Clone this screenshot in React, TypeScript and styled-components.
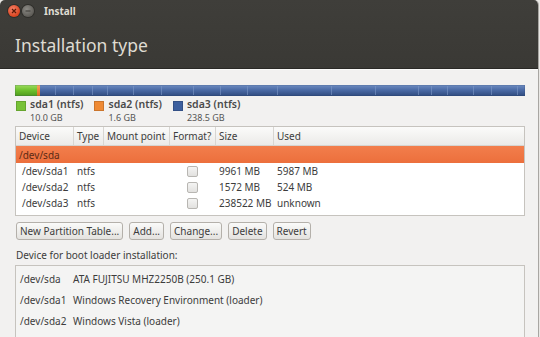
import React from 'react';
import styled, { createGlobalStyle } from 'styled-components';

const GlobalStyle = createGlobalStyle`
  html, body {
    margin: 0;
    padding: 0;
    background: #e9e7e4;
  }
  body {
    font-family: "Noto Sans", "DejaVu Sans", sans-serif;
    font-size: 10px;
    color: #3c3c3c;
  }
`;

const Window = styled.div`
  width: 538px;
  height: 337px;
  overflow: hidden;
  background: #f2f1f0;
  border-right: 1px solid #a8a6a2;
  border-radius: 5px 5px 0 0;
  display: flex;
  flex-direction: column;
`;

const Header = styled.div`
  height: 68px;
  background: linear-gradient(#3f3e3a, #3a3935);
  border-bottom: 1px solid #2a2926;
  display: flex;
  flex-direction: column;
  flex-shrink: 0;
`;

const TitleBar = styled.div`
  height: 21px;
  display: flex;
  align-items: center;
  padding-left: 8px;
  gap: 2px;
`;

const WinButton = styled.div<{ $kind: 'close' | 'min' }>`
  width: 12px;
  height: 12px;
  border-radius: 50%;
  display: flex;
  align-items: center;
  justify-content: center;
  background: ${p => (p.$kind === 'close'
    ? 'radial-gradient(circle at 40% 35%, #f6836a, #d9431e 70%)'
    : 'radial-gradient(circle at 40% 35%, #8c8a85, #5e5c57 70%)')};
  box-shadow: 0 0 0 1px #2f2e2a;
`;

const Title = styled.span`
  margin-left: 8px;
  font-weight: bold;
  font-size: 10px;
  color: #dfdbd2;
`;

const Heading = styled.h1`
  margin: 12px 0 0 15px;
  font-weight: normal;
  font-size: 17.5px;
  color: #dfdbd2;
`;

const Body = styled.div`
  flex: 1;
  padding: 15px 13px 0 15px;
  border-top: 1px solid #fafaf9;
  display: flex;
  flex-direction: column;
`;

const Legend = styled.div`
  display: flex;
  gap: 11px;
  margin-top: 2px;
  padding-left: 1px;
`;

const LegendItem = styled.div`
  display: flex;
  gap: 4px;
`;

const Swatch = styled.div<{ $color: string }>`
  width: 8px;
  height: 8px;
  margin-top: 3px;
  background: ${p => p.$color};
  border: 1px solid rgba(0, 0, 0, 0.15);
`;

const LegendText = styled.div`
  display: flex;
  flex-direction: column;
  gap: 1px;
`;

const LegendName = styled.span`
  font-size: 10.5px;
  line-height: 13px;
  font-weight: 600;
  color: #4a4a4a;
`;

const LegendSize = styled.span`
  font-size: 9px;
  line-height: 11px;
  color: #555;
`;

const Table = styled.div`
  margin-top: 3px;
  background: #fff;
  border: 1px solid #c6c3be;
  height: 88px;
`;

const Row = styled.div<{ $selected?: boolean }>`
  display: grid;
  grid-template-columns: 58px 30px 66px 46px 58px 1fr;
  height: ${p => (p.$selected ? 17 : 16)}px;
  align-items: center;
  background: ${p => (p.$selected ? 'linear-gradient(#f27e4c, #ec6f3c)' : 'transparent')};
  color: ${p => (p.$selected ? '#5c2a14' : '#3c3c3c')};
`;

const HeadRow = styled(Row)`
  height: 18px;
  background: linear-gradient(#fbfbfa, #ebeae8);
  border-bottom: 1px solid #d6d4d0;
`;

const Cell = styled.div<{ $indent?: boolean }>`
  padding-left: ${p => (p.$indent ? 6 : 3)}px;
  white-space: nowrap;
  display: flex;
`;

const HeadCell = styled(Cell)`
  height: 100%;
  align-items: center;
  border-right: 1px solid #d8d6d2;
  &:last-child { border-right: none; }
`;

const Check = styled.div`
  width: 9px;
  height: 9px;
  border: 1px solid #b8b6b2;
  border-radius: 2px;
  background: linear-gradient(#f4f4f3, #e2e1df);
  margin-left: 14px;
`;

const ButtonRow = styled.div`
  display: flex;
  gap: 6px;
  margin-top: 6px;
  padding-left: 1px;
`;

const Button = styled.div`
  height: 16px;
  padding: 0 3px;
  display: flex;
  align-items: center;
  border: 1px solid #b4b0aa;
  border-radius: 3px;
  background: linear-gradient(#fafaf9, #e4e2df);
  color: #3c3c3c;
  font-size: 10px;
`;

const Label = styled.div`
  margin-top: 8px;
  padding-left: 1px;
  color: #3c3c3c;
`;

const BootList = styled.div`
  margin-top: 3px;
  flex: 1;
  border: 1px solid #c6c3be;
  border-bottom: none;
  background: #f4f4f3;
  padding: 2px 0 0 4px;
`;

const BootRow = styled.div`
  display: grid;
  grid-template-columns: 53px 1fr;
  height: 21px;
  align-items: center;
  color: #3c3c3c;
`;

const bar = (
  <svg width="510" height="11" viewBox="0 0 510 11" style={{ display: 'block' }}>
    <defs>
      <linearGradient id="g" x1="0" y1="0" x2="0" y2="1">
        <stop offset="0" stopColor="#9ddc5c" />
        <stop offset="0.5" stopColor="#6cbf2c" />
        <stop offset="1" stopColor="#4e9a1c" />
      </linearGradient>
      <linearGradient id="o" x1="0" y1="0" x2="0" y2="1">
        <stop offset="0" stopColor="#f7a35e" />
        <stop offset="1" stopColor="#e06a1c" />
      </linearGradient>
      <linearGradient id="b" x1="0" y1="0" x2="0" y2="1">
        <stop offset="0" stopColor="#6e8cc0" />
        <stop offset="0.45" stopColor="#4b6ba6" />
        <stop offset="1" stopColor="#2f4a7e" />
      </linearGradient>
    </defs>
    <rect x="0" y="0" width="22" height="11" fill="url(#g)" />
    <rect x="22" y="0" width="3" height="11" fill="url(#o)" />
    <rect x="25" y="0" width="485" height="11" fill="url(#b)" />
    {[40, 58, 77, 92, 118, 146, 178, 205, 232, 262, 316, 360, 403, 416, 432, 458, 476, 502].map(x => (
      <rect key={x} x={x} y="1" width="1" height="9" fill="#7d97c6" opacity="0.6" />
    ))}
    <rect x="0" y="0" width="510" height="11" fill="none" stroke="#2c3f66" strokeOpacity="0.35" />
  </svg>
);

const partitions = [
  { dev: '/dev/sda1', type: 'ntfs', size: '9961 MB', used: '5987 MB' },
  { dev: '/dev/sda2', type: 'ntfs', size: '1572 MB', used: '524 MB' },
  { dev: '/dev/sda3', type: 'ntfs', size: '238522 MB', used: 'unknown' },
];

const bootDevices = [
  ['/dev/sda', 'ATA FUJITSU MHZ2250B (250.1 GB)'],
  ['/dev/sda1', 'Windows Recovery Environment (loader)'],
  ['/dev/sda2', 'Windows Vista (loader)'],
  ['/dev/sda3', 'Windows Vista (loader)'],
];

export default function App() {
  return (
    <>
      <GlobalStyle />
      <Window>
        <Header>
          <TitleBar>
            <WinButton $kind="close">
              <svg width="6" height="6" viewBox="0 0 6 6">
                <path d="M1 1L5 5M5 1L1 5" stroke="#5a1a08" strokeWidth="1.2" />
              </svg>
            </WinButton>
            <WinButton $kind="min">
              <svg width="6" height="6" viewBox="0 0 6 6">
                <path d="M0.5 3H5.5" stroke="#3a3935" strokeWidth="1.2" />
              </svg>
            </WinButton>
            <Title>Install</Title>
          </TitleBar>
          <Heading>Installation type</Heading>
        </Header>
        <Body>
          {bar}
          <Legend>
            <LegendItem>
              <Swatch $color="#78c237" />
              <LegendText>
                <LegendName>sda1 (ntfs)</LegendName>
                <LegendSize>10.0 GB</LegendSize>
              </LegendText>
            </LegendItem>
            <LegendItem>
              <Swatch $color="#ef8a34" />
              <LegendText>
                <LegendName>sda2 (ntfs)</LegendName>
                <LegendSize>1.6 GB</LegendSize>
              </LegendText>
            </LegendItem>
            <LegendItem>
              <Swatch $color="#3d5f9e" />
              <LegendText>
                <LegendName>sda3 (ntfs)</LegendName>
                <LegendSize>238.5 GB</LegendSize>
              </LegendText>
            </LegendItem>
          </Legend>
          <Table>
            <HeadRow>
              <HeadCell>Device</HeadCell>
              <HeadCell>Type</HeadCell>
              <HeadCell>Mount point</HeadCell>
              <HeadCell>Format?</HeadCell>
              <HeadCell>Size</HeadCell>
              <HeadCell>Used</HeadCell>
            </HeadRow>
            <Row $selected>
              <Cell>/dev/sda</Cell>
            </Row>
            {partitions.map(p => (
              <Row key={p.dev}>
                <Cell $indent>{p.dev}</Cell>
                <Cell>{p.type}</Cell>
                <Cell />
                <Cell><Check /></Cell>
                <Cell>{p.size}</Cell>
                <Cell>{p.used}</Cell>
              </Row>
            ))}
          </Table>
          <ButtonRow>
            <Button>New Partition Table...</Button>
            <Button>Add...</Button>
            <Button>Change...</Button>
            <Button>Delete</Button>
            <Button>Revert</Button>
          </ButtonRow>
          <Label>Device for boot loader installation:</Label>
          <BootList>
            {bootDevices.map(([dev, name]) => (
              <BootRow key={dev}>
                <span>{dev}</span>
                <span>{name}</span>
              </BootRow>
            ))}
          </BootList>
        </Body>
      </Window>
    </>
  );
}
